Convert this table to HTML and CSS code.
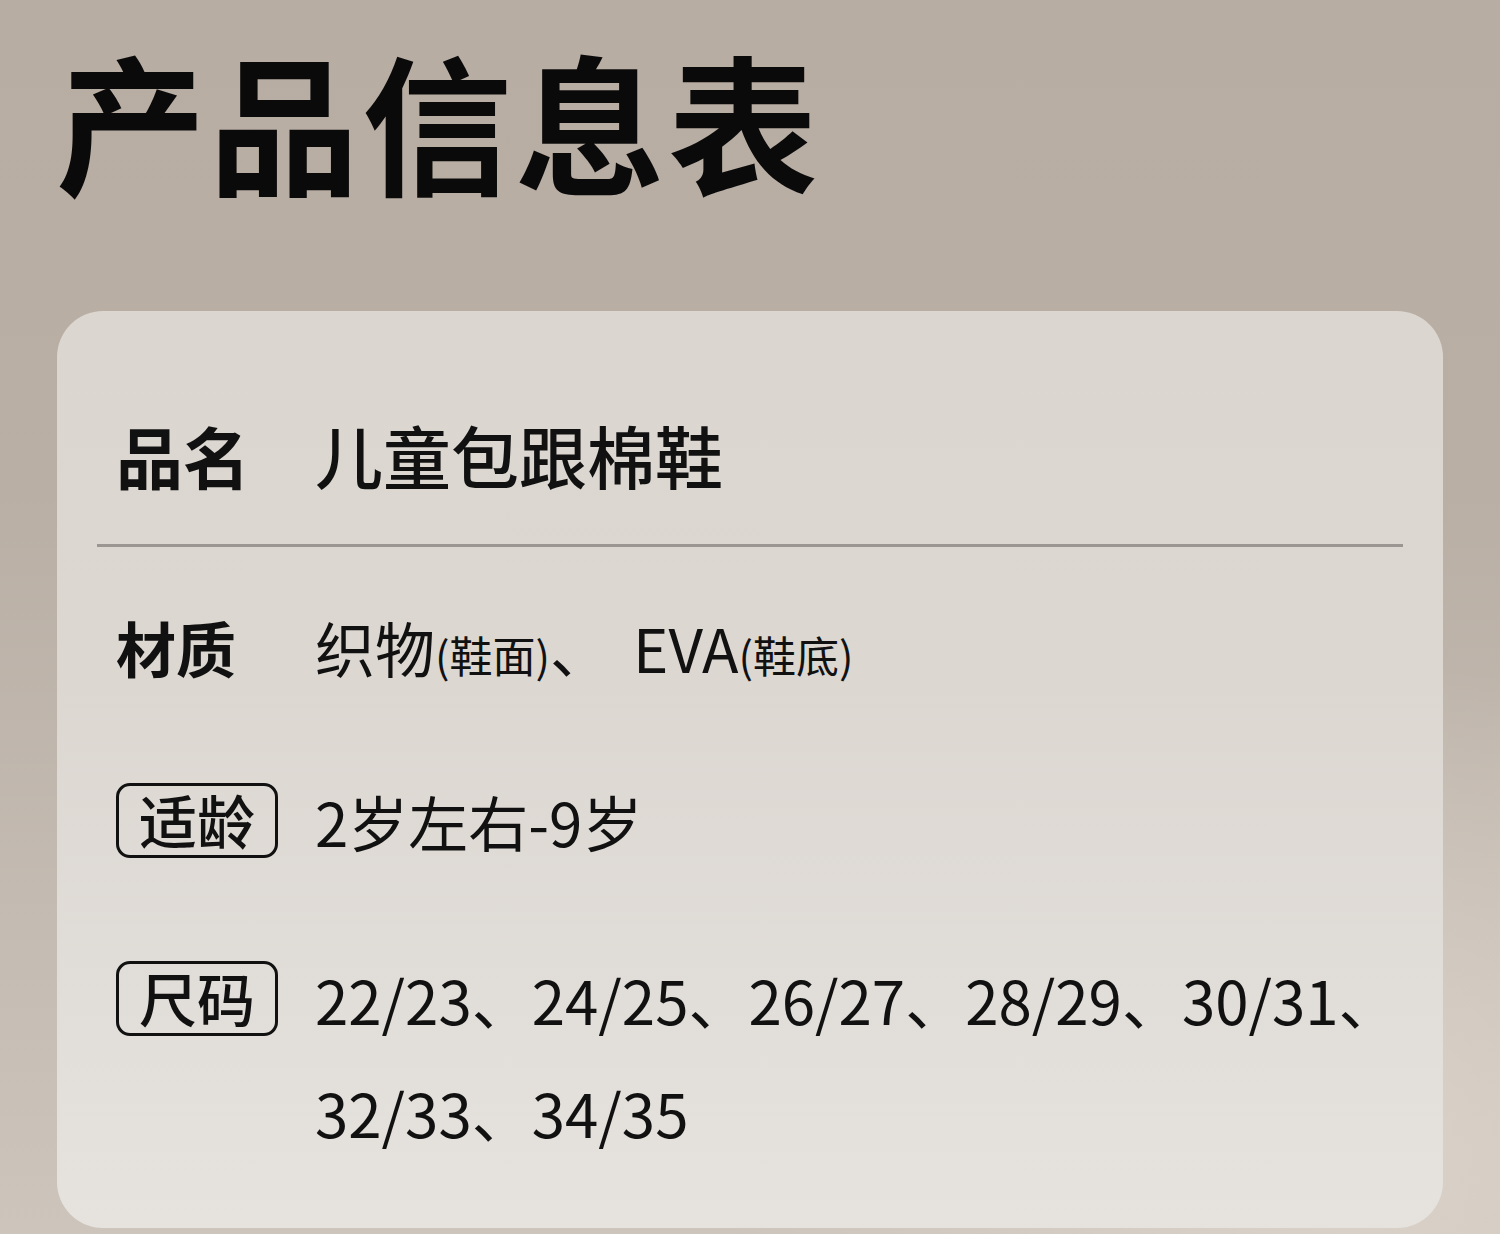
FILE: index.html
```html
<!DOCTYPE html>
<html lang="zh-CN">
<head>
<meta charset="utf-8">
<title>产品信息表</title>
<link rel="stylesheet" href="styles.css">
</head>
<body>
<div class="page">
  <h1 class="title">产品信息表</h1>
  <section class="card">
    <div class="row row-name">
      <div class="label">品名</div>
      <div class="value">儿童包跟棉鞋</div>
    </div>
    <div class="divider"></div>
    <div class="row row-material">
      <div class="label">材质</div>
      <div class="value">织物<span class="small">(鞋面)</span>、<span class="latin">EVA</span><span class="small">(鞋底)</span></div>
    </div>
    <div class="row row-age">
      <div class="tag">适龄</div>
      <div class="value">2岁左右-9岁</div>
    </div>
    <div class="row row-size">
      <div class="tag">尺码</div>
      <div class="value sizes">22/23、24/25、26/27、28/29、30/31、<br>32/33、34/35</div>
    </div>
  </section>
</div>
</body>
</html>
```

FILE: styles.css
```css
html, body {
  margin: 0;
  padding: 0;
}

body {
  width: 1500px;
  height: 1234px;
  overflow: hidden;
  font-family: "Noto Sans CJK SC", "Noto Sans", sans-serif;
  color: #111;
  background:
    radial-gradient(ellipse 900px 700px at 1350px 1150px, rgba(220, 212, 203, 0.9), rgba(220, 212, 203, 0) 70%),
    linear-gradient(180deg, #b7ada3 0%, #b9afa5 40%, #c4bbb2 75%, #cdc5bc 100%);
}

.page {
  display: flex;
  flex-direction: column;
  align-items: flex-start;
}

.title {
  margin: 44px 0 0 56px;
  font-size: 150px;
  line-height: 150px;
  font-weight: 700;
  color: #0a0a0a;
  letter-spacing: 3px;
}

.card {
  box-sizing: border-box;
  margin: 117px 0 0 57px;
  width: 1386px;
  height: 917px;
  border-radius: 46px;
  padding: 104px 40px 0 40px;
  background: linear-gradient(180deg, #dbd6d0 0%, #dcd7d1 40%, #e1ddd8 75%, #e6e2dd 100%);
  display: flex;
  flex-direction: column;
}

.row {
  display: grid;
  grid-template-columns: 199px 1fr;
  align-items: start;
  padding-left: 19px;
}

.label, .value {
  white-space: nowrap;
}

.row-name {
  font-size: 67px;
  line-height: 80px;
  font-weight: 500;
}

.row-name .label {
  font-weight: 700;
}

.row-name .value {
  font-size: 68px;
  font-weight: 500;
}

.divider {
  margin-top: 49px;
  height: 3px;
  background: #9b9692;
}

.row-material {
  margin-top: 60px;
  font-size: 60px;
  line-height: 80px;
}

.row-material .label {
  font-weight: 700;
}

.row-material .value {
  font-weight: 400;
}

.small {
  font-size: 43px;
  line-height: 1;
}

.latin {
  margin-left: 23px;
}

.tag {
  box-sizing: border-box;
  width: 162px;
  height: 75px;
  border: 3px solid #111;
  border-radius: 14px;
  font-size: 58px;
  line-height: 67px;
  font-weight: 500;
  text-align: center;
}

.row-age {
  margin-top: 96px;
  font-size: 60px;
  line-height: 75px;
}

.row-size {
  margin-top: 84px;
  font-size: 60px;
  line-height: 113px;
}

.row-size .tag {
  margin-top: 19px;
}

.value {
  font-weight: 400;
}
```
